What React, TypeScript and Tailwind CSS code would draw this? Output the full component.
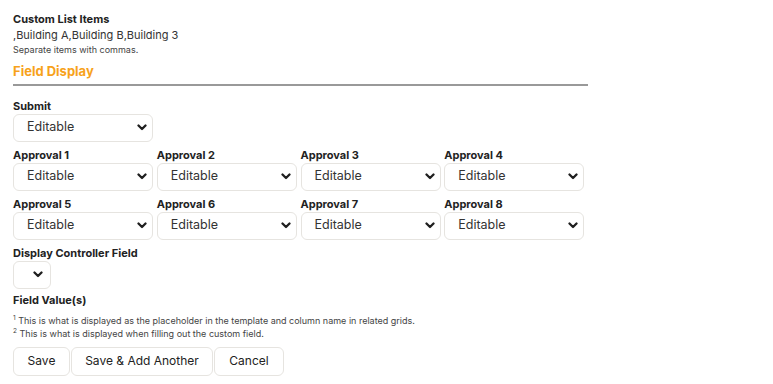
import React from "react";

const Chevron = () => (
  <svg width="10" height="7" viewBox="0 0 10 7" className="shrink-0">
    <path d="M1.5 1.5 L5 5 L8.5 1.5" fill="none" stroke="#1f1f1f" strokeWidth="2.3" strokeLinecap="round" strokeLinejoin="round" />
  </svg>
);

const Select = ({ value = "Editable" }: { value?: string }) => (
  <div className="w-[140px] h-[28px] border border-[#e6e4e0] rounded-[6px] bg-white flex items-center justify-between pl-[13px] pr-[5px]">
    <span className="text-[12.5px] text-[#333]">{value}</span>
    <Chevron />
  </div>
);

const Label = ({ children }: { children: React.ReactNode }) => (
  <div className="text-[11px] font-bold text-[#222] mt-[6px] h-[15px] leading-[15px]">{children}</div>
);

const Field = ({ label }: { label: string }) => (
  <div className="flex flex-col">
    <Label>{label}</Label>
    <Select />
  </div>
);

export default function App() {
  const rows = [
    ["Approval 1", "Approval 2", "Approval 3", "Approval 4"],
    ["Approval 5", "Approval 6", "Approval 7", "Approval 8"],
  ];
  return (
    <div className="bg-white w-[773px] h-[384px] px-[13px] pt-[11px]" style={{ fontFamily: "Inter, 'Liberation Sans', sans-serif" }}>
      <div className="w-[575px]">
        <div className="text-[11px] font-bold text-[#222] leading-[16px]">Custom List Items</div>
        <div className="text-[11px] text-[#333] leading-[16px]">,Building A,Building B,Building 3</div>
        <div className="text-[9px] text-[#444] leading-[14px]">Separate items with commas.</div>
        <div className="text-[13px] font-bold text-[#f7a21b] leading-[22px] mt-[3px]">Field Display</div>
        <div className="h-[1.5px] bg-[#999999] mt-[2px]" />
        <div className="mt-[7px]">
          <Field label="Submit" />
        </div>
        {rows.map((r, i) => (
          <div key={i} className="grid grid-cols-4">
            {r.map((l) => (
              <Field key={l} label={l} />
            ))}
          </div>
        ))}
        <div className="flex flex-col">
          <Label>Display Controller Field</Label>
          <div className="w-[38px] h-[28px] border border-[#e6e4e0] rounded-[6px] bg-white flex items-center justify-end pr-[7px]">
            <Chevron />
          </div>
        </div>
        <div className="text-[11px] font-bold text-[#222] leading-[16px] mt-[3px]">Field Value(s)</div>
        <div className="text-[9px] text-[#444] leading-[13px] mt-[6px]">
          <sup className="text-[6.5px]">1</sup> This is what is displayed as the placeholder in the template and column name in related grids.
        </div>
        <div className="text-[9px] text-[#444] leading-[13px]">
          <sup className="text-[6.5px]">2</sup> This is what is displayed when filling out the custom field.
        </div>
        <div className="flex mt-[7px]">
          <button className="w-[57px] h-[29px] border border-[#e6e4e0] rounded-[6px] bg-white text-[12px] text-[#222]">Save</button>
          <button className="w-[142px] h-[29px] border border-[#e6e4e0] rounded-[6px] bg-white text-[12px] text-[#222] ml-[1px]">Save &amp; Add Another</button>
          <button className="w-[70px] h-[29px] border border-[#e6e4e0] rounded-[6px] bg-white text-[12px] text-[#222] ml-[1px]">Cancel</button>
        </div>
      </div>
    </div>
  );
}
